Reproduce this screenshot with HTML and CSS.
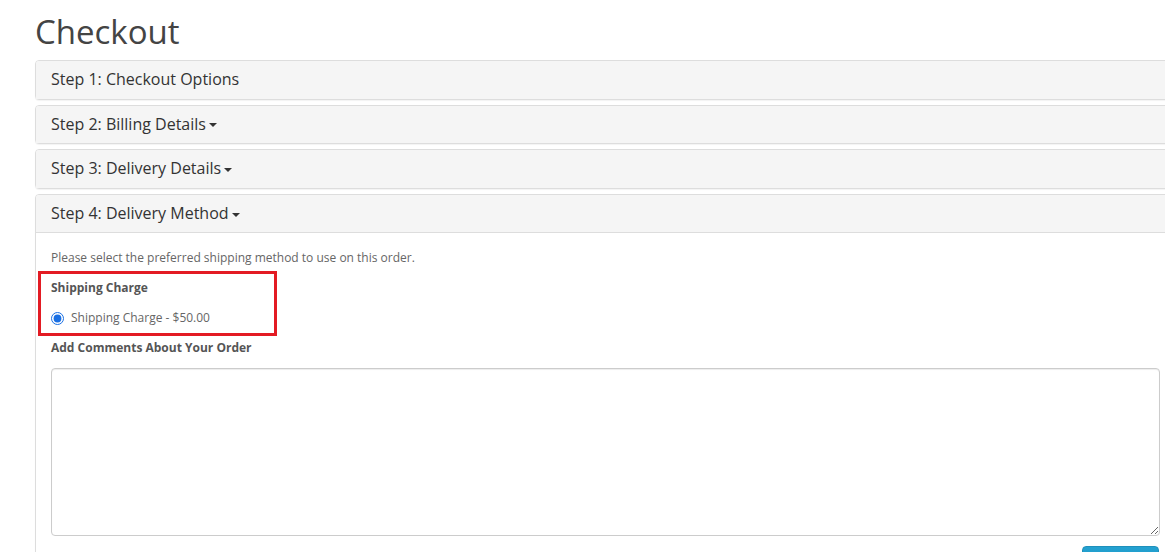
FILE: index.html
```html
<!DOCTYPE html>
<html>
<head>
<meta charset="utf-8">
<link rel="stylesheet" href="styles.css">
</head>
<body>
<div class="page">
  <h1 class="title">Checkout</h1>
  <div class="panel-group">
    <div class="panel">
      <div class="panel-heading"><h4 class="panel-title">Step 1: Checkout Options</h4></div>
    </div>
    <div class="panel">
      <div class="panel-heading"><h4 class="panel-title">Step 2: Billing Details <span class="caret"></span></h4></div>
    </div>
    <div class="panel">
      <div class="panel-heading"><h4 class="panel-title">Step 3: Delivery Details <span class="caret"></span></h4></div>
    </div>
    <div class="panel">
      <div class="panel-heading"><h4 class="panel-title">Step 4: Delivery Method <span class="caret"></span></h4></div>
      <div class="panel-body">
        <p class="text">Please select the preferred shipping method to use on this order.</p>
        <div class="method">
          <p class="text"><strong>Shipping Charge</strong></p>
          <div class="radio">
            <label class="radio-label"><input class="radio-input" type="radio" name="shipping" checked> Shipping Charge - $50.00</label>
          </div>
          <div class="highlight"></div>
        </div>
        <p class="text"><strong>Add Comments About Your Order</strong></p>
        <p class="text"><textarea class="comment" rows="8"></textarea></p>
        <div class="buttons">
          <button class="btn-primary" type="button">Continue</button>
        </div>
      </div>
    </div>
  </div>
</div>
</body>
</html>
```

FILE: styles.css
```css
html, body {
  margin: 0;
  padding: 0;
  overflow: hidden;
  background: #fff;
}
body {
  font-family: "Open Sans", "DejaVu Sans", sans-serif;
  font-size: 12px;
  line-height: 20px;
  color: #666;
  width: 1165px;
  height: 552px;
}
.page {
  margin-left: 35px;
  width: 1141px;
}
.title {
  font-family: "Open Sans", sans-serif;
  font-weight: 400;
  font-size: 33px;
  line-height: 36px;
  color: #444;
  margin: 14px 0 10px 0;
}
.panel {
  border: 1px solid #ddd;
  border-radius: 4px;
  background: #fff;
  box-shadow: 0 1px 1px rgba(0,0,0,0.05);
}
.panel + .panel {
  margin-top: 5px;
}
.panel-heading {
  background: #f5f5f5;
  padding: 10px 15px;
  border-radius: 3px 3px 0 0;
}
.panel-title {
  margin: 0;
  font-size: 16px;
  line-height: 1.1;
  font-weight: 400;
  color: #333;
}
.caret {
  display: inline-block;
  width: 0;
  height: 0;
  margin-left: -1px;
  vertical-align: middle;
  border-top: 4px solid #333;
  border-left: 4px solid transparent;
  border-right: 4px solid transparent;
}
.panel-body {
  border-top: 1px solid #ddd;
  padding: 15px;
}
.text {
  margin: 0 0 10px 0;
}
.text strong {
  font-weight: 700;
  color: #555;
}
.method {
  position: relative;
}
.radio {
  margin: 10px 0;
}
.radio-label {
  display: block;
  padding-left: 20px;
  color: #666;
}
.radio-input {
  margin: 4px 0 0 -20px;
  float: left;
  width: 13px;
  height: 13px;
  accent-color: #1a6fe3;
}
.highlight {
  position: absolute;
  left: -13px;
  top: -7px;
  width: 233px;
  height: 59px;
  border: 3px solid #e31b23;
  pointer-events: none;
}
.comment {
  display: block;
  box-sizing: border-box;
  width: 100%;
  height: 168px;
  border: 1px solid #ccc;
  border-radius: 4px;
  box-shadow: inset 0 1px 1px rgba(0,0,0,0.075);
  resize: vertical;
  font-family: inherit;
  margin: 0;
}
.buttons {
  display: flex;
  justify-content: flex-end;
  padding-right: 1px;
}
.btn-primary {
  font-family: inherit;
  font-size: 12px;
  line-height: 20px;
  padding: 7px 12px;
  width: 77px;
  color: #fff;
  background: linear-gradient(#23a1d1, #1f90bb);
  border: 1px solid #1f90bb;
  border-radius: 4px;
}
```
